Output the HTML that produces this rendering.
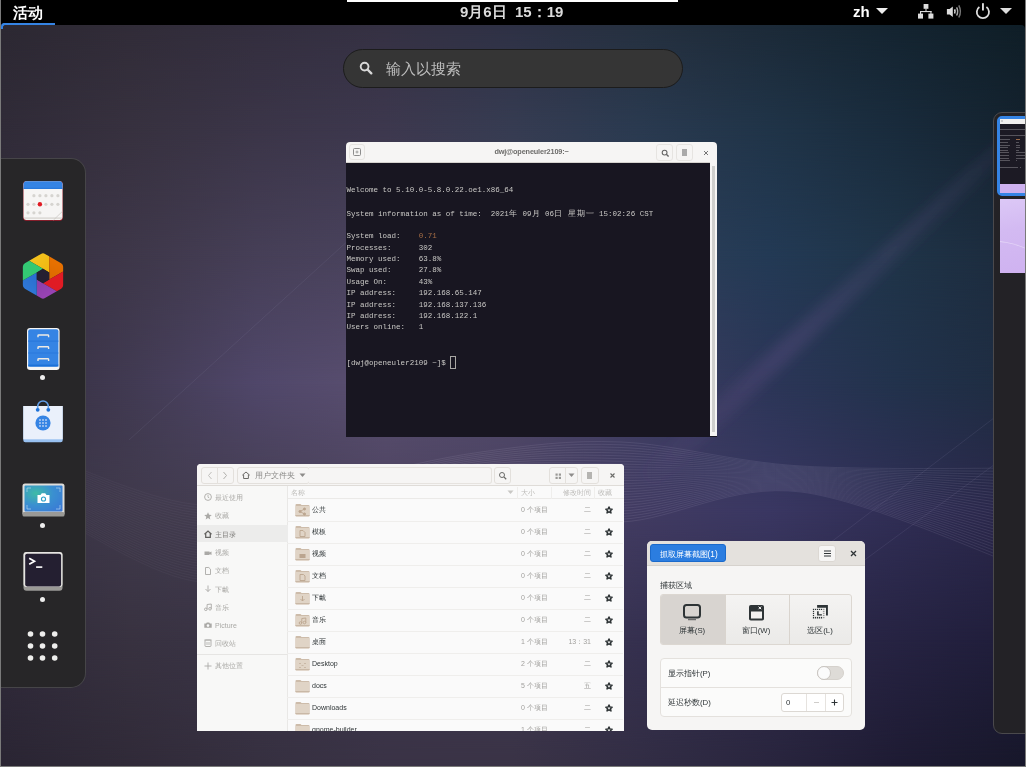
<!DOCTYPE html>
<html><head><meta charset="utf-8">
<style>
*{margin:0;padding:0;box-sizing:border-box}
html,body{width:1026px;height:767px;overflow:hidden;background:#7a7a7a}
body{font-family:"Liberation Sans",sans-serif;position:relative}
.a{position:absolute}
#screen{position:absolute;left:1px;top:0;width:1024px;height:766px;overflow:hidden;background:#2c2836;will-change:transform}
#bg{position:absolute;left:0;top:0;width:1024px;height:766px;overflow:hidden}
#panel{position:absolute;left:0;top:0;width:1024px;height:25px;overflow:visible;will-change:transform;background:#000;color:#fff}
#search{position:absolute;left:342px;top:49px;width:340px;height:39px;border-radius:20px;background:#353535;border:1px solid #1c1c1c}
#dock{position:absolute;left:-1px;top:158px;width:86px;height:530px;background:#272628;border:1px solid #464548;border-left:none;border-radius:0 15px 15px 0}
.win{position:absolute;overflow:hidden}
.fmt{font-size:7px;line-height:12px;white-space:nowrap}
.btn{border:1px solid #e3e0dc;border-radius:3px;background:#f6f5f4}
.ssl{font-size:7.8px;line-height:12px;color:#2e3436;text-align:center;white-space:nowrap}
.ssr{font-size:7.8px;line-height:12px;color:#2e3436;white-space:nowrap}
.cj{display:inline-block;width:9.02px;text-align:center;font-size:8px}
#term{left:345px;top:142px;width:371px;height:295px;background:#181621;border-radius:4px 4px 0 0}
#term .hb{position:absolute;left:0;top:0;width:100%;height:21px;background:#f6f5f4;border-bottom:1px solid #d6d3cf}
#fm{left:196px;top:464px;width:427px;height:267px;background:#fafafa;border-radius:4px 4px 0 0}
#ss{left:646px;top:541px;width:218px;height:189px;background:#f6f5f4;border-radius:5px}
#ws{position:absolute;left:992px;top:112px;width:40px;height:622px;background:#232226;border:1px solid #4a494c;border-radius:9px 0 0 9px;overflow:hidden}
</style></head><body>
<div id="screen">
<div id="bg"><div class="a" style="left:0;top:0;width:1024px;height:24px;background:linear-gradient(90deg,#2c2832 0.00%,#312c38 12.50%,#332e3e 25.00%,#353143 37.50%,#2e3145 50.00%,#25303f 62.50%,#1c2a38 75.00%,#142430 87.50%,#0f1e27 100.00%)"></div><div class="a" style="left:0;top:24px;width:1024px;height:104px;background:linear-gradient(90deg,#2c2832 0.00%,#312c38 12.50%,#332e3e 25.00%,#353143 37.50%,#2e3145 50.00%,#25303f 62.50%,#1c2a38 75.00%,#142430 87.50%,#0f1e27 100.00%)"></div><div class="a" style="left:0;top:24px;width:1024px;height:104px;background:linear-gradient(90deg,#302b38 0.00%,#37313f 12.50%,#3b3548 25.00%,#3d384e 37.50%,#363c52 50.00%,#2a3a50 62.50%,#203448 75.00%,#192b3c 87.50%,#14222e 100.00%);-webkit-mask-image:linear-gradient(180deg,transparent,#000);mask-image:linear-gradient(180deg,transparent,#000)"></div><div class="a" style="left:0;top:128px;width:1024px;height:128px;background:linear-gradient(90deg,#302b38 0.00%,#37313f 12.50%,#3b3548 25.00%,#3d384e 37.50%,#363c52 50.00%,#2a3a50 62.50%,#203448 75.00%,#192b3c 87.50%,#14222e 100.00%)"></div><div class="a" style="left:0;top:128px;width:1024px;height:128px;background:linear-gradient(90deg,#36303e 0.00%,#3e3749 12.50%,#463f57 25.00%,#4a435e 37.50%,#3f3f5a 50.00%,#2e3f58 62.50%,#233a55 75.00%,#1f3448 87.50%,#1c2a3c 100.00%);-webkit-mask-image:linear-gradient(180deg,transparent,#000);mask-image:linear-gradient(180deg,transparent,#000)"></div><div class="a" style="left:0;top:256px;width:1024px;height:128px;background:linear-gradient(90deg,#36303e 0.00%,#3e3749 12.50%,#463f57 25.00%,#4a435e 37.50%,#3f3f5a 50.00%,#2e3f58 62.50%,#233a55 75.00%,#1f3448 87.50%,#1c2a3c 100.00%)"></div><div class="a" style="left:0;top:256px;width:1024px;height:128px;background:linear-gradient(90deg,#342e3e 0.00%,#413a52 12.50%,#50476a 25.00%,#5a4f70 37.50%,#504868 50.00%,#3e3e62 62.50%,#2c3658 75.00%,#22324c 87.50%,#1e2c40 100.00%);-webkit-mask-image:linear-gradient(180deg,transparent,#000);mask-image:linear-gradient(180deg,transparent,#000)"></div><div class="a" style="left:0;top:384px;width:1024px;height:128px;background:linear-gradient(90deg,#342e3e 0.00%,#413a52 12.50%,#50476a 25.00%,#5a4f70 37.50%,#504868 50.00%,#3e3e62 62.50%,#2c3658 75.00%,#22324c 87.50%,#1e2c40 100.00%)"></div><div class="a" style="left:0;top:384px;width:1024px;height:128px;background:linear-gradient(90deg,#383244 0.00%,#403a4c 12.50%,#453e52 25.00%,#4c435f 37.50%,#4a4262 50.00%,#413b62 62.50%,#3a3762 75.00%,#302e55 87.50%,#292648 100.00%);-webkit-mask-image:linear-gradient(180deg,transparent,#000);mask-image:linear-gradient(180deg,transparent,#000)"></div><div class="a" style="left:0;top:512px;width:1024px;height:128px;background:linear-gradient(90deg,#383244 0.00%,#403a4c 12.50%,#453e52 25.00%,#4c435f 37.50%,#4a4262 50.00%,#413b62 62.50%,#3a3762 75.00%,#302e55 87.50%,#292648 100.00%)"></div><div class="a" style="left:0;top:512px;width:1024px;height:128px;background:linear-gradient(90deg,#302a3a 0.00%,#383240 12.50%,#3a3447 25.00%,#3c354a 37.50%,#3e3850 50.00%,#35304f 62.50%,#2e2a48 75.00%,#262342 87.50%,#1f1d3a 100.00%);-webkit-mask-image:linear-gradient(180deg,transparent,#000);mask-image:linear-gradient(180deg,transparent,#000)"></div><div class="a" style="left:0;top:640px;width:1024px;height:126px;background:linear-gradient(90deg,#302a3a 0.00%,#383240 12.50%,#3a3447 25.00%,#3c354a 37.50%,#3e3850 50.00%,#35304f 62.50%,#2e2a48 75.00%,#262342 87.50%,#1f1d3a 100.00%)"></div><div class="a" style="left:0;top:640px;width:1024px;height:126px;background:linear-gradient(90deg,#2a2533 0.00%,#302a38 12.50%,#363040 25.00%,#3a3346 37.50%,#3a3346 50.00%,#322d44 62.50%,#29253e 75.00%,#1e1b33 87.50%,#17172a 100.00%);-webkit-mask-image:linear-gradient(180deg,transparent,#000);mask-image:linear-gradient(180deg,transparent,#000)"></div></div>
<svg id="bgfx" class="a" style="left:0;top:0" width="1024" height="766"><defs><linearGradient id="stg" x1="0" y1="1" x2="1" y2="0"><stop offset="0" stop-color="#7a5a9a" stop-opacity="0"/><stop offset="0.35" stop-color="#7a5a9a" stop-opacity="0.25"/><stop offset="1" stop-color="#7a5a9a" stop-opacity="0"/></linearGradient>
<filter id="blr" x="-20%" y="-20%" width="140%" height="140%"><feGaussianBlur stdDeviation="6"/></filter></defs>
<path d="M640 470 L1040 100 L1040 125 L650 490Z" fill="url(#stg)" filter="url(#blr)"/><path d="M880 258 L1000 146" stroke="#8a6aa0" stroke-width="2" opacity="0.25" filter="url(#blr)"/>
<g stroke="#b8b0d8" stroke-width="0.8" fill="none" opacity="0.12"><path d="M800 565 L1010 405"/><path d="M850 570 L1020 445"/><path d="M128 440 L350 238"/></g><defs><linearGradient id="wg" gradientUnits="userSpaceOnUse" x1="0" y1="0" x2="1024" y2="0"><stop offset="0" stop-color="#d8d0e8" stop-opacity="0.35"/><stop offset="0.2" stop-color="#d8d0e8" stop-opacity="0.45"/><stop offset="0.45" stop-color="#d8d0e8" stop-opacity="1"/><stop offset="1" stop-color="#d8d0e8" stop-opacity="1"/></linearGradient></defs><g fill="none" stroke="url(#wg)" stroke-width="0.6" opacity="0.17"><path d="M60.0 462.0 C83.3 469.2 153.3 502.0 200.0 505.0 C246.7 508.0 293.3 488.8 340.0 480.0 C386.7 471.2 433.3 458.3 480.0 452.0 C526.7 445.7 566.7 439.7 620.0 442.0 C673.3 444.3 730.0 461.7 800.0 466.0 C870.0 470.3 1000.0 467.7 1040.0 468.0"/><path d="M60.0 464.0 C83.3 471.3 153.3 504.6 200.0 507.7 C246.7 510.7 293.3 491.2 340.0 482.2 C386.7 473.3 433.3 460.1 480.0 453.8 C526.7 447.6 566.7 442.6 620.0 444.8 C673.3 446.9 730.0 462.4 800.0 466.9 C870.0 471.4 1000.0 470.9 1040.0 471.7"/><path d="M60.0 466.0 C83.3 473.4 153.3 507.2 200.0 510.3 C246.7 513.4 293.3 493.6 340.0 484.5 C386.7 475.4 433.3 461.8 480.0 455.7 C526.7 449.5 566.7 445.5 620.0 447.5 C673.3 449.5 730.0 463.1 800.0 467.8 C870.0 472.4 1000.0 474.1 1040.0 475.4"/><path d="M60.0 468.0 C83.3 475.5 153.3 509.8 200.0 513.0 C246.7 516.1 293.3 496.0 340.0 486.7 C386.7 477.5 433.3 463.6 480.0 457.5 C526.7 451.4 566.7 448.4 620.0 450.3 C673.3 452.1 730.0 463.9 800.0 468.7 C870.0 473.5 1000.0 477.3 1040.0 479.1"/><path d="M60.0 470.0 C83.3 477.6 153.3 512.5 200.0 515.6 C246.7 518.8 293.3 498.4 340.0 489.0 C386.7 479.6 433.3 465.3 480.0 459.3 C526.7 453.3 566.7 451.3 620.0 453.0 C673.3 454.7 730.0 464.6 800.0 469.6 C870.0 474.5 1000.0 480.6 1040.0 482.8"/><path d="M60.0 472.0 C83.3 479.7 153.3 515.1 200.0 518.3 C246.7 521.5 293.3 500.7 340.0 491.2 C386.7 481.7 433.3 467.0 480.0 461.1 C526.7 455.2 566.7 454.2 620.0 455.8 C673.3 457.4 730.0 465.4 800.0 470.5 C870.0 475.6 1000.0 483.8 1040.0 486.4"/><path d="M60.0 474.0 C83.3 481.8 153.3 517.7 200.0 520.9 C246.7 524.2 293.3 503.1 340.0 493.4 C386.7 483.8 433.3 468.8 480.0 463.0 C526.7 457.1 566.7 457.1 620.0 458.6 C673.3 460.0 730.0 466.1 800.0 471.4 C870.0 476.6 1000.0 487.0 1040.0 490.1"/><path d="M60.0 476.0 C83.3 483.9 153.3 520.3 200.0 523.6 C246.7 526.9 293.3 505.5 340.0 495.7 C386.7 485.9 433.3 470.5 480.0 464.8 C526.7 459.1 566.7 460.1 620.0 461.3 C673.3 462.6 730.0 466.9 800.0 472.3 C870.0 477.7 1000.0 490.2 1040.0 493.8"/><path d="M60.0 478.0 C83.3 486.0 153.3 522.9 200.0 526.2 C246.7 529.6 293.3 507.9 340.0 497.9 C386.7 488.0 433.3 472.3 480.0 466.6 C526.7 461.0 566.7 463.0 620.0 464.1 C673.3 465.2 730.0 467.6 800.0 473.2 C870.0 478.7 1000.0 493.5 1040.0 497.5"/><path d="M60.0 480.0 C83.3 488.1 153.3 525.5 200.0 528.9 C246.7 532.3 293.3 510.2 340.0 500.2 C386.7 490.1 433.3 474.0 480.0 468.4 C526.7 462.9 566.7 465.9 620.0 466.8 C673.3 467.8 730.0 468.3 800.0 474.1 C870.0 479.8 1000.0 496.7 1040.0 501.2"/><path d="M60.0 482.0 C83.3 490.3 153.3 528.1 200.0 531.6 C246.7 535.0 293.3 512.6 340.0 502.4 C386.7 492.2 433.3 475.7 480.0 470.3 C526.7 464.8 566.7 468.8 620.0 469.6 C673.3 470.4 730.0 469.1 800.0 475.0 C870.0 480.9 1000.0 499.9 1040.0 504.9"/><path d="M60.0 484.0 C83.3 492.4 153.3 530.8 200.0 534.2 C246.7 537.6 293.3 515.0 340.0 504.7 C386.7 494.3 433.3 477.5 480.0 472.1 C526.7 466.7 566.7 471.7 620.0 472.3 C673.3 473.0 730.0 469.8 800.0 475.9 C870.0 481.9 1000.0 503.1 1040.0 508.6"/><path d="M60.0 486.0 C83.3 494.5 153.3 533.4 200.0 536.9 C246.7 540.3 293.3 517.4 340.0 506.9 C386.7 496.4 433.3 479.2 480.0 473.9 C526.7 468.6 566.7 474.6 620.0 475.1 C673.3 475.6 730.0 470.6 800.0 476.8 C870.0 483.0 1000.0 506.4 1040.0 512.3"/><path d="M60.0 488.0 C83.3 496.6 153.3 536.0 200.0 539.5 C246.7 543.0 293.3 519.8 340.0 509.1 C386.7 498.5 433.3 481.0 480.0 475.8 C526.7 470.5 566.7 477.5 620.0 477.9 C673.3 478.2 730.0 471.3 800.0 477.7 C870.0 484.0 1000.0 509.6 1040.0 516.0"/><path d="M60.0 490.0 C83.3 498.7 153.3 538.6 200.0 542.2 C246.7 545.7 293.3 522.1 340.0 511.4 C386.7 500.6 433.3 482.7 480.0 477.6 C526.7 472.5 566.7 480.5 620.0 480.6 C673.3 480.8 730.0 472.0 800.0 478.6 C870.0 485.1 1000.0 512.8 1040.0 519.7"/><path d="M60.0 492.0 C83.3 500.8 153.3 541.2 200.0 544.8 C246.7 548.4 293.3 524.5 340.0 513.6 C386.7 502.7 433.3 484.5 480.0 479.4 C526.7 474.4 566.7 483.4 620.0 483.4 C673.3 483.4 730.0 472.8 800.0 479.4 C870.0 486.1 1000.0 516.0 1040.0 523.3"/><path d="M60.0 494.0 C83.3 502.9 153.3 543.8 200.0 547.5 C246.7 551.1 293.3 526.9 340.0 515.9 C386.7 504.8 433.3 486.2 480.0 481.2 C526.7 476.3 566.7 486.3 620.0 486.1 C673.3 486.0 730.0 473.5 800.0 480.3 C870.0 487.2 1000.0 519.3 1040.0 527.0"/><path d="M60.0 496.0 C83.3 505.0 153.3 546.5 200.0 550.1 C246.7 553.8 293.3 529.3 340.0 518.1 C386.7 506.9 433.3 487.9 480.0 483.1 C526.7 478.2 566.7 489.2 620.0 488.9 C673.3 488.6 730.0 474.3 800.0 481.2 C870.0 488.2 1000.0 522.5 1040.0 530.7"/><path d="M60.0 498.0 C83.3 507.1 153.3 549.1 200.0 552.8 C246.7 556.5 293.3 531.7 340.0 520.3 C386.7 509.0 433.3 489.7 480.0 484.9 C526.7 480.1 566.7 492.1 620.0 491.7 C673.3 491.2 730.0 475.0 800.0 482.1 C870.0 489.3 1000.0 525.7 1040.0 534.4"/><path d="M60.0 500.0 C83.3 509.2 153.3 551.7 200.0 555.4 C246.7 559.2 293.3 534.0 340.0 522.6 C386.7 511.1 433.3 491.4 480.0 486.7 C526.7 482.0 566.7 495.0 620.0 494.4 C673.3 493.8 730.0 475.8 800.0 483.0 C870.0 490.3 1000.0 528.9 1040.0 538.1"/><path d="M60.0 502.0 C83.3 511.4 153.3 554.3 200.0 558.1 C246.7 561.9 293.3 536.4 340.0 524.8 C386.7 513.2 433.3 493.2 480.0 488.6 C526.7 483.9 566.7 497.9 620.0 497.2 C673.3 496.4 730.0 476.5 800.0 483.9 C870.0 491.4 1000.0 532.1 1040.0 541.8"/><path d="M60.0 504.0 C83.3 513.5 153.3 556.9 200.0 560.8 C246.7 564.6 293.3 538.8 340.0 527.1 C386.7 515.3 433.3 494.9 480.0 490.4 C526.7 485.9 566.7 500.9 620.0 499.9 C673.3 499.0 730.0 477.2 800.0 484.8 C870.0 492.4 1000.0 535.4 1040.0 545.5"/><path d="M60.0 506.0 C83.3 515.6 153.3 559.5 200.0 563.4 C246.7 567.3 293.3 541.2 340.0 529.3 C386.7 517.4 433.3 496.6 480.0 492.2 C526.7 487.8 566.7 503.8 620.0 502.7 C673.3 501.6 730.0 478.0 800.0 485.7 C870.0 493.5 1000.0 538.6 1040.0 549.2"/><path d="M60.0 508.0 C83.3 517.7 153.3 562.1 200.0 566.1 C246.7 570.0 293.3 543.6 340.0 531.6 C386.7 519.5 433.3 498.4 480.0 494.0 C526.7 489.7 566.7 506.7 620.0 505.4 C673.3 504.2 730.0 478.7 800.0 486.6 C870.0 494.5 1000.0 541.8 1040.0 552.9"/><path d="M60.0 510.0 C83.3 519.8 153.3 564.8 200.0 568.7 C246.7 572.7 293.3 545.9 340.0 533.8 C386.7 521.6 433.3 500.1 480.0 495.9 C526.7 491.6 566.7 509.6 620.0 508.2 C673.3 506.8 730.0 479.5 800.0 487.5 C870.0 495.6 1000.0 545.0 1040.0 556.6"/><path d="M60.0 512.0 C83.3 521.9 153.3 567.4 200.0 571.4 C246.7 575.4 293.3 548.3 340.0 536.0 C386.7 523.8 433.3 501.9 480.0 497.7 C526.7 493.5 566.7 512.5 620.0 511.0 C673.3 509.4 730.0 480.2 800.0 488.4 C870.0 496.6 1000.0 548.3 1040.0 560.2"/><path d="M60.0 514.0 C83.3 524.0 153.3 570.0 200.0 574.0 C246.7 578.1 293.3 550.7 340.0 538.3 C386.7 525.9 433.3 503.6 480.0 499.5 C526.7 495.4 566.7 515.4 620.0 513.7 C673.3 512.0 730.0 480.9 800.0 489.3 C870.0 497.7 1000.0 551.5 1040.0 563.9"/><path d="M60.0 516.0 C83.3 526.1 153.3 572.6 200.0 576.7 C246.7 580.8 293.3 553.1 340.0 540.5 C386.7 528.0 433.3 505.4 480.0 501.3 C526.7 497.3 566.7 518.3 620.0 516.5 C673.3 514.6 730.0 481.7 800.0 490.2 C870.0 498.7 1000.0 554.7 1040.0 567.6"/><path d="M60.0 518.0 C83.3 528.2 153.3 575.2 200.0 579.3 C246.7 583.5 293.3 555.5 340.0 542.8 C386.7 530.1 433.3 507.1 480.0 503.2 C526.7 499.3 566.7 521.3 620.0 519.2 C673.3 517.2 730.0 482.4 800.0 491.1 C870.0 499.8 1000.0 557.9 1040.0 571.3"/><path d="M60.0 520.0 C83.3 530.3 153.3 577.8 200.0 582.0 C246.7 586.2 293.3 557.8 340.0 545.0 C386.7 532.2 433.3 508.8 480.0 505.0 C526.7 501.2 566.7 524.2 620.0 522.0 C673.3 519.8 730.0 483.2 800.0 492.0 C870.0 500.8 1000.0 561.2 1040.0 575.0"/></g></svg>
<div id="panel">
 <div class="a" style="left:0;top:23px;width:54px;height:2px;background:#3584e4"></div>
 <div class="a" style="left:0;top:23px;width:10px;height:6px;overflow:hidden"><div class="a" style="left:0;top:0;width:30px;height:30px;border-radius:4px;border-top:2px solid #3584e4;border-left:2px solid #3584e4;box-shadow:0 0 0 6px #000"></div></div>
 <div class="a" style="left:1014px;top:25px;width:10px;height:10px;overflow:hidden"><div class="a" style="left:-20px;top:0;width:30px;height:30px;border-radius:4px;box-shadow:0 0 0 6px #000"></div></div>
 <div class="a" style="left:12px;top:3.5px;font-size:14.5px;font-weight:bold;color:#fff;line-height:18px">活动</div>
 <div class="a" style="left:346px;top:0;width:331px;height:2px;background:#fff"></div>
 <div class="a" style="left:459px;top:3px;font-size:15px;font-weight:bold;color:#dcdcdc;line-height:18px;white-space:pre">9月6日  15：19</div>
 <div class="a" style="left:852px;top:3px;font-size:15px;font-weight:bold;color:#fff;line-height:18px">zh</div>
 <svg class="a" style="left:874px;top:7px" width="14" height="8"><path d="M1 1H13L7 7Z" fill="#eee"/></svg>
 <svg class="a" style="left:916px;top:3px" width="17" height="17" viewBox="0 0 17 17"><g fill="#ddd"><rect x="6.6" y="1" width="4.8" height="4.8"/><rect x="1" y="10.6" width="5" height="5"/><rect x="11.4" y="10.6" width="5" height="5"/><rect x="8.5" y="5.5" width="1" height="3"/><rect x="3" y="8" width="11.5" height="1.1"/><rect x="3" y="8" width="1.1" height="3"/><rect x="13.4" y="8" width="1.1" height="3"/></g></svg>
 <svg class="a" style="left:944px;top:3px" width="18" height="16" viewBox="0 0 18 16"><path d="M1.9 6.1H4.6L7.8 3.6V14.1L4.6 11.5H1.9Z" fill="#ddd"/><path d="M9.6 6.3Q10.6 8.4 9.6 10.5" stroke="#ddd" stroke-width="1.6" fill="none"/><path d="M11.6 4.3Q13.8 8.4 11.6 12.5" stroke="#aaa" stroke-width="1.5" fill="none"/><path d="M13.8 2.3Q17 8.4 13.8 14.5" stroke="#777" stroke-width="1.5" fill="none"/></svg>
 <svg class="a" style="left:973.5px;top:3px" width="16" height="16" viewBox="0 0 16 16"><path d="M4.4 4A6.1 6.1 0 1 0 11.4 4" stroke="#ddd" stroke-width="1.8" fill="none"/><rect x="7" y="0.2" width="1.9" height="7.3" fill="#ddd"/></svg>
 <svg class="a" style="left:997.5px;top:7px" width="14" height="8"><path d="M1 1H13L7 7Z" fill="#ddd"/></svg>
</div>
<div id="search">
 <svg class="a" style="left:15px;top:11px" width="15" height="15" viewBox="0 0 15 15"><circle cx="5.6" cy="5.6" r="3.9" stroke="#d8d8d8" stroke-width="1.9" fill="none"/><path d="M8.5 8.5L12.3 12.3" stroke="#d8d8d8" stroke-width="2.4" stroke-linecap="round"/></svg>
 <div class="a" style="left:42px;top:10px;font-size:15px;color:#bdbdbd;line-height:18px">输入以搜索</div>
</div>
<div id="dock">
 <!-- calendar -->
 <svg class="a" style="left:23px;top:22px" width="40" height="40" viewBox="0 0 40 40">
  <rect x="0.2" y="0.3" width="39.6" height="39.4" rx="3" fill="#a51d2d"/>
  <rect x="0.5" y="0.3" width="39" height="38.6" rx="3" fill="#f6f5f4"/>
  <rect x="1" y="36.4" width="38" height="1.4" fill="#d8d6d2"/>
  <path d="M0.5 3.3A3 3 0 0 1 3.5 0.3H36.5A3 3 0 0 1 39.5 3.3V7.8H0.5Z" fill="#3584e4"/>
  <rect x="0.5" y="6.9" width="39" height="0.9" fill="#1c71d8"/>
  <g fill="#d6d4d0"><circle cx="10.9" cy="14.7" r="1.6"/><circle cx="16.9" cy="14.7" r="1.6"/><circle cx="22.9" cy="14.7" r="1.6"/><circle cx="28.9" cy="14.7" r="1.6"/><circle cx="34.9" cy="14.7" r="1.6"/><circle cx="5" cy="23.3" r="1.6"/><circle cx="10.9" cy="23.3" r="1.6"/><circle cx="22.9" cy="23.3" r="1.6"/><circle cx="28.9" cy="23.3" r="1.6"/><circle cx="34.9" cy="23.3" r="1.6"/><circle cx="5" cy="31.8" r="1.6"/><circle cx="10.9" cy="31.8" r="1.6"/><circle cx="16.9" cy="31.8" r="1.6"/></g>
  <circle cx="16.9" cy="23.3" r="2.2" fill="#e01b24"/>
  <path d="M39.3 30.5L30.5 39" stroke="#c8c6c2" stroke-width="0.7"/>
 </svg>
 <!-- hexagon -->
 <svg class="a" style="left:21px;top:94px" width="44" height="46" viewBox="0 0 44 46">
  <defs>
   <mask id="hm"><path d="M22.00 4.35 L38.15 13.68 L38.15 32.32 L22.00 41.65 L5.85 32.32 L5.85 13.67Z" fill="#fff" stroke="#fff" stroke-width="8" stroke-linejoin="round"/></mask>
   <linearGradient id="hy" x1="0" y1="0" x2="1" y2="1"><stop offset="0" stop-color="#f8d43a"/><stop offset="1" stop-color="#f0b810"/></linearGradient>
   <linearGradient id="ho" x1="0.5" y1="0" x2="0.2" y2="1"><stop offset="0" stop-color="#ff8000"/><stop offset="1" stop-color="#dd6a00"/></linearGradient>
   <linearGradient id="hp" x1="0" y1="0" x2="0.6" y2="1"><stop offset="0" stop-color="#8a3ea8"/><stop offset="1" stop-color="#b04cc8"/></linearGradient>
   <linearGradient id="hb" x1="0.8" y1="0" x2="0.3" y2="1"><stop offset="0" stop-color="#2a6fd0"/><stop offset="1" stop-color="#3a8ee8"/></linearGradient>
  </defs>
  <g mask="url(#hm)"><path d="M22.00 15.80 L28.24 19.40 L28.24 -25.60 L-16.97 -6.70Z" fill="url(#hy)"/><path d="M28.24 19.40 L28.24 26.60 L67.21 4.10 L28.24 -25.60Z" fill="url(#ho)"/><path d="M28.24 26.60 L22.00 30.20 L60.97 52.70 L67.21 4.10Z" fill="#e01b24"/><path d="M22.00 30.20 L15.76 26.60 L15.76 71.60 L60.97 52.70Z" fill="url(#hp)"/><path d="M15.76 26.60 L15.76 19.40 L-23.21 41.90 L15.76 71.60Z" fill="url(#hb)"/><path d="M15.76 19.40 L22.00 15.80 L-16.97 -6.70 L-23.21 41.90Z" fill="#33c873"/></g>
  <path d="M22.00 15.80 L28.24 19.40 L28.24 26.60 L22.00 30.20 L15.76 26.60 L15.76 19.40Z" fill="#241f31"/>
 </svg>
 <!-- files -->
 <svg class="a" style="left:27px;top:169px" width="33" height="42" viewBox="0 0 33 42">
  <rect x="0" y="0" width="32.6" height="42" rx="3.2" fill="#f6f5f4"/>
  <rect x="1.2" y="1.3" width="30.2" height="37.3" rx="2" fill="#3584e4"/>
  <path d="M1.2 13.2H31.4M1.2 25H31.4" stroke="#2a78dc" stroke-width="1.2"/>
  <rect x="1.2" y="36.6" width="30.2" height="2" fill="#1c71d8"/>
  <path d="M11 9.2V7.6Q11 7.0 11.8 7.0H20.8Q21.6 7.0 21.6 7.6V9.2" fill="none" stroke="#eeeae4" stroke-width="1.4"/><path d="M11 21.0V19.4Q11 18.8 11.8 18.8H20.8Q21.6 18.8 21.6 19.4V21.0" fill="none" stroke="#eeeae4" stroke-width="1.4"/><path d="M11 32.9V31.3Q11 30.7 11.8 30.7H20.8Q21.6 30.7 21.6 31.3V32.9" fill="none" stroke="#eeeae4" stroke-width="1.4"/>
 </svg>
 <div class="a" style="left:40px;top:216px;width:5px;height:5px;border-radius:50%;background:#eee"></div>
 <!-- store -->
 <svg class="a" style="left:23px;top:241px" width="40" height="43" viewBox="0 0 40 43">
  <path d="M0.3 6H39.7V40.3A2 2 0 0 1 37.7 42.3H2.3A2 2 0 0 1 0.3 40.3Z" fill="#99c1f1"/>
  <rect x="0.3" y="6" width="39.4" height="33.3" fill="#eaf0fb"/>
  <path d="M14.7 9.8V6.3A5.3 5.3 0 0 1 25.3 6.3V9.8" stroke="#62a0ea" stroke-width="1.6" fill="none"/>
  <circle cx="14.7" cy="9.8" r="1.9" fill="#1c71d8"/><circle cx="25.3" cy="9.8" r="1.9" fill="#1c71d8"/>
  <circle cx="20" cy="23" r="7.6" fill="#3584e4"/>
  <g fill="#a8c8f0"><rect x="16.1" y="19.1" width="1.8" height="1.8"/><rect x="19.1" y="19.1" width="1.8" height="1.8"/><rect x="22.1" y="19.1" width="1.8" height="1.8"/><rect x="16.1" y="22.1" width="1.8" height="1.8"/><rect x="19.1" y="22.1" width="1.8" height="1.8"/><rect x="22.1" y="22.1" width="1.8" height="1.8"/><rect x="16.1" y="25.1" width="1.8" height="1.8"/><rect x="19.1" y="25.1" width="1.8" height="1.8"/><rect x="22.1" y="25.1" width="1.8" height="1.8"/></g>
 </svg>
 <!-- screenshot -->
 <svg class="a" style="left:21.5px;top:324px" width="43" height="34" viewBox="0 0 43 34">
  <rect x="0.5" y="0.5" width="42" height="32" rx="2.5" fill="#deddda"/>
  <rect x="0.5" y="29" width="42" height="4.5" rx="1.5" fill="#9a9996"/>
  <defs><radialGradient id="sg" cx="0.3" cy="0.3" r="0.9"><stop offset="0" stop-color="#3fbba6"/><stop offset="0.5" stop-color="#3a90d0"/><stop offset="1" stop-color="#3a78d6"/></radialGradient></defs>
  <rect x="2.5" y="2.5" width="38" height="26" rx="1" fill="url(#sg)"/>
  <path d="M5 9V5H9M34 5H38V9M38 22V26H34M9 26H5V22" stroke="#cfe8f5" stroke-width="0.8" fill="none" opacity="0.7"/>
  <path d="M15.5 12H18.5L19.8 10.3H23.2L24.5 12H27.5V20H15.5Z" fill="#fff"/>
  <circle cx="21.5" cy="16" r="2.6" fill="#2a9fc8"/><circle cx="21.5" cy="16" r="1.5" fill="#fff"/>
 </svg>
 <div class="a" style="left:40px;top:364px;width:5px;height:5px;border-radius:50%;background:#eee"></div>
 <!-- terminal -->
 <svg class="a" style="left:23px;top:392.6px" width="40" height="40" viewBox="0 0 40 40">
  <rect x="0.5" y="0" width="39" height="38.7" rx="3" fill="#9a9996"/>
  <rect x="0.5" y="0" width="39" height="35" rx="3" fill="#e6e5e2"/>
  <rect x="2.2" y="1.7" width="35.9" height="32.7" rx="1.8" fill="#241f31"/>
  <path d="M6.2 6.3L11.5 9.3L6.2 12.3" stroke="#fff" stroke-width="1.7" fill="none"/>
  <rect x="13.1" y="14.3" width="6.2" height="1.6" fill="#fff"/>
 </svg>
 <div class="a" style="left:40px;top:438px;width:5px;height:5px;border-radius:50%;background:#eee"></div>
 <!-- grid -->
 <svg class="a" style="left:26px;top:470px" width="34" height="34" viewBox="0 0 34 34">
  <g fill="#eeeeec"><circle cx="4.5" cy="5" r="2.8"/><circle cx="16.5" cy="5" r="2.8"/><circle cx="28.7" cy="5" r="2.8"/>
  <circle cx="4.5" cy="17" r="2.8"/><circle cx="16.5" cy="17" r="2.8"/><circle cx="28.7" cy="17" r="2.8"/>
  <circle cx="4.5" cy="29" r="2.8"/><circle cx="16.5" cy="29" r="2.8"/><circle cx="28.7" cy="29" r="2.8"/></g>
 </svg>
</div>
<div class="win" id="term">
 <div class="hb">
  <div class="a" style="left:3px;top:2px;width:16px;height:16px;border:1px solid #e6e4e1;border-radius:3px;background:#f6f5f4"></div>
  <svg class="a" style="left:7px;top:6px" width="8" height="8" viewBox="0 0 8 8"><rect x="0.5" y="0.5" width="7" height="7" rx="1" fill="none" stroke="#8d8d8d" stroke-width="1"/><path d="M2.5 4H5.5M4 2.5V5.5" stroke="#8d8d8d" stroke-width="0.8"/></svg>
  <div class="a" style="left:0;top:5px;width:371px;text-align:center;font-size:7.3px;color:#6d6c6a;line-height:10px;font-weight:bold;letter-spacing:-0.15px">dwj@openeuler2109:~</div>
  <div class="a" style="left:310px;top:2px;width:17px;height:17px;border:1px solid #e6e4e1;border-radius:3px;background:#f6f5f4"></div>
  <svg class="a" style="left:314.5px;top:6.5px" width="9" height="9" viewBox="0 0 9 9"><circle cx="3.6" cy="3.6" r="2.4" stroke="#666" stroke-width="1.1" fill="none"/><path d="M5.3 5.3L7.6 7.6" stroke="#666" stroke-width="1.4"/></svg>
  <div class="a" style="left:330px;top:2px;width:17px;height:17px;border:1px solid #e6e4e1;border-radius:3px;background:#f6f5f4"></div>
  <div class="a" style="left:336px;top:7px;width:5px;height:7px;background:#aaa"></div>
  <svg class="a" style="left:357px;top:7.5px" width="6" height="6" viewBox="0 0 6 6"><path d="M1 1L5 5M5 1L1 5" stroke="#666" stroke-width="0.9"/></svg>
 </div>
 <pre class="a" style="left:0.5px;margin:0;font-family:'Liberation Mono',monospace;font-size:7.52px;line-height:11.37px;color:#c9c8c5;top:20px">


Welcome to 5.10.0-5.8.0.22.oe1.x86_64

System information as of time:  2021<span class="cj">年</span> 09<span class="cj">月</span> 06<span class="cj">日</span> <span class="cj">星</span><span class="cj">期</span><span class="cj">一</span> 15:02:26 CST

System load:    <span style="color:#a86e45">0.71</span>
Processes:      302
Memory used:    63.8%
Swap used:      27.8%
Usage On:       43%
IP address:     192.168.65.147
IP address:     192.168.137.136
IP address:     192.168.122.1
Users online:   1


[dwj@openeuler2109 ~]$ <span style="display:inline-block;width:5.5px;height:12.3px;border:1px solid #a8a7a4;vertical-align:-3.3px"></span></pre>
 <div class="a" style="left:364px;top:20px;width:7px;height:274px;background:#f6f5f4"></div>
 <div class="a" style="left:366px;top:24px;width:3px;height:266px;background:#cfcfcd"></div>
</div>
<div class="win" id="fm">
 <div class="a" style="left:0;top:0;width:427px;height:22px;background:#f6f5f4;border-bottom:1px solid #dfdcd8"></div>
 <div class="a btn" style="left:4px;top:3px;width:33px;height:17px"></div>
 <div class="a" style="left:20px;top:3px;width:1px;height:17px;background:#e4e1dd"></div>
 <svg class="a" style="left:9px;top:7px" width="8" height="9" viewBox="0 0 8 9"><path d="M5.5 1L2.5 4.5L5.5 8" fill="none" stroke="#c0bfbc" stroke-width="1"/></svg>
 <svg class="a" style="left:24px;top:7px" width="8" height="9" viewBox="0 0 8 9"><path d="M2.5 1L5.5 4.5L2.5 8" fill="none" stroke="#b0afac" stroke-width="1"/></svg>
 <div class="a btn" style="left:40px;top:3px;width:73px;height:17px"></div>
 <svg class="a" style="left:44px;top:6px" width="10" height="10" viewBox="0 0 10 10"><path d="M1.3 5.2L5 2L8.7 5.2M2.6 4.5V8.5H7.4V4.5" fill="none" stroke="#6d6c69" stroke-width="1"/></svg>
 <div class="a fmt" style="left:58px;top:5px;color:#8b8a88;font-size:8.3px;line-height:12px">用户文件夹</div>
 <svg class="a" style="left:102px;top:9px" width="7" height="5"><path d="M0.5 0.5H6.5L3.5 4Z" fill="#8d8c8a"/></svg>
 <div class="a" style="left:112px;top:3px;width:183px;height:17px;border:1px solid #e6e3df;border-left:none;border-radius:0 3px 3px 0;background:#f6f5f4"></div>
 <div class="a btn" style="left:297px;top:3px;width:17px;height:17px"></div>
 <svg class="a" style="left:301px;top:7px" width="10" height="10" viewBox="0 0 10 10"><circle cx="4" cy="4" r="2.5" stroke="#6a6a68" stroke-width="1" fill="none"/><path d="M5.9 5.9L8.2 8.2" stroke="#6a6a68" stroke-width="1.3"/></svg>
 <div class="a btn" style="left:352px;top:3px;width:29px;height:17px"></div>
 <div class="a" style="left:368px;top:3px;width:1px;height:17px;background:#e4e1dd"></div>
 <svg class="a" style="left:357.5px;top:8.5px" width="7" height="7"><g fill="#9a9996"><rect x="0.5" y="0.5" width="2.2" height="2.2"/><rect x="3.8" y="0.5" width="2.2" height="2.2"/><rect x="0.5" y="3.8" width="2.2" height="2.2"/><rect x="3.8" y="3.8" width="2.2" height="2.2"/></g></svg>
 <svg class="a" style="left:371px;top:9px" width="7" height="5"><path d="M0.5 0.5H6.5L3.5 4Z" fill="#8d8c8a"/></svg>
 <div class="a btn" style="left:384px;top:3px;width:18px;height:17px"></div>
 <div class="a" style="left:390px;top:8px;width:5px;height:7px;background:#b5b4b1"></div>
 <svg class="a" style="left:413px;top:8.7px" width="5" height="5" viewBox="0 0 5 5"><path d="M0.5 0.5L4.5 4.5M4.5 0.5L0.5 4.5" stroke="#6a6a68" stroke-width="1.1"/></svg>
 <div class="a" style="left:0;top:22px;width:91px;height:245px;background:#f8f8f7;border-right:1px solid #e9e8e6">
  <div class="a" style="left:0;top:39px;width:90.5px;height:17px;background:#ececeb"></div>
 </div>
 <div class="a" style="left:0;top:0;width:90px;height:244px"><svg class="a" style="left:6px;top:28px" width="10" height="10" viewBox="0 0 10 10"><circle cx="5" cy="5" r="3.4" fill="none" stroke="#aaa9a6" stroke-width="0.9"/><path d="M5 3V5.2L6.3 6" fill="none" stroke="#aaa9a6" stroke-width="0.8"/></svg><div class="a fmt" style="left:18px;top:27.5px;color:#aaa9a6">最近使用</div><svg class="a" style="left:6px;top:46.5px" width="10" height="10" viewBox="0 0 10 10"><path d="M5 1.3L6.1 3.8L8.8 4L6.7 5.8L7.3 8.5L5 7.1L2.7 8.5L3.3 5.8L1.2 4L3.9 3.8Z" fill="#aaa9a6"/></svg><div class="a fmt" style="left:18px;top:46.0px;color:#aaa9a6">收藏</div><svg class="a" style="left:6px;top:65px" width="10" height="10" viewBox="0 0 10 10"><path d="M1.5 5.2L5 2L8.5 5.2M2.7 4.5V8.3H7.3V4.5" fill="none" stroke="#62615e" stroke-width="1.25"/></svg><div class="a fmt" style="left:18px;top:64.5px;color:#7f7e7b">主目录</div><svg class="a" style="left:6px;top:83.5px" width="10" height="10" viewBox="0 0 10 10"><path d="M1.5 3.5H6.5V7H1.5ZM6.5 4.5L8.5 3.5V7L6.5 6Z" fill="#aaa9a6"/></svg><div class="a fmt" style="left:18px;top:83.0px;color:#aaa9a6">视频</div><svg class="a" style="left:6px;top:101.5px" width="10" height="10" viewBox="0 0 10 10"><path d="M2.5 1.5H5.8L7.5 3.2V8.5H2.5Z" fill="none" stroke="#aaa9a6" stroke-width="0.9"/></svg><div class="a fmt" style="left:18px;top:101.0px;color:#aaa9a6">文档</div><svg class="a" style="left:6px;top:120px" width="10" height="10" viewBox="0 0 10 10"><path d="M5 1.5V7.5M2.5 5L5 7.5L7.5 5" fill="none" stroke="#aaa9a6" stroke-width="0.9"/></svg><div class="a fmt" style="left:18px;top:119.5px;color:#aaa9a6">下載</div><svg class="a" style="left:6px;top:138px" width="10" height="10" viewBox="0 0 10 10"><g fill="none" stroke="#aaa9a6" stroke-width="0.9"><circle cx="2.8" cy="7.3" r="1.3"/><circle cx="7" cy="6.8" r="1.3"/><path d="M4.1 7.3V2.5L8.3 2V6.8"/></g></svg><div class="a fmt" style="left:18px;top:137.5px;color:#aaa9a6">音乐</div><svg class="a" style="left:6px;top:156px" width="10" height="10" viewBox="0 0 10 10"><path d="M1.3 3.5H3L3.8 2.5H6.2L7 3.5H8.7V7.8H1.3Z" fill="#aaa9a6"/><circle cx="5" cy="5.6" r="1.3" fill="#fafafa"/></svg><div class="a fmt" style="left:18px;top:155.5px;color:#aaa9a6">Picture</div><svg class="a" style="left:6px;top:174.39999999999998px" width="10" height="10" viewBox="0 0 10 10"><rect x="2" y="2" width="6" height="6.5" rx="0.8" fill="none" stroke="#aaa9a6" stroke-width="0.9"/><path d="M1.3 2H8.7M4 4V7M6 4V7" stroke="#aaa9a6" stroke-width="0.8"/></svg><div class="a fmt" style="left:18px;top:173.9px;color:#aaa9a6">回收站</div><div class="a" style="left:0;top:190px;width:90px;height:1px;background:#e6e5e3"></div><svg class="a" style="left:6px;top:196.79999999999995px" width="10" height="10" viewBox="0 0 10 10"><path d="M5 1.5V8.5M1.5 5H8.5" stroke="#aaa9a6" stroke-width="0.9"/></svg><div class="a fmt" style="left:18px;top:196.3px;color:#aaa9a6">其他位置</div></div>
 <div class="a" style="left:91px;top:22px;width:336px;height:13px;border-bottom:1px solid #ebeae8;background:#fafafa"></div>
 <div class="a fmt" style="left:94px;top:23px;color:#bdbcb9">名称</div>
 <svg class="a" style="left:310px;top:26px" width="7" height="5"><path d="M0.5 0.5H6.5L3.5 4Z" fill="#c8c7c4"/></svg>
 <div class="a" style="left:320px;top:23px;width:1px;height:12px;background:#efeeec"></div>
 <div class="a fmt" style="left:324px;top:23px;color:#bdbcb9">大小</div>
 <div class="a" style="left:354px;top:23px;width:1px;height:12px;background:#efeeec"></div>
 <div class="a fmt" style="left:366px;top:23px;color:#bdbcb9">修改时间</div>
 <div class="a" style="left:397px;top:23px;width:1px;height:12px;background:#efeeec"></div>
 <div class="a fmt" style="left:401px;top:23px;color:#bdbcb9">收藏</div>
 <div class="a" style="left:90px;top:46px;width:336px;height:0"><svg class="a" style="left:8px;top:-7px" width="15" height="14" viewBox="0 0 15 14"><path d="M0.5 2A1 1 0 0 1 1.5 1H5.5L6.5 2H13.5A1 1 0 0 1 14.5 3V12.5A1 1 0 0 1 13.5 13.5H1.5A1 1 0 0 1 0.5 12.5Z" fill="#cdbcaa"/><path d="M0.5 4A1 1 0 0 1 1.5 3H13.5A1 1 0 0 1 14.5 4V12.5A1 1 0 0 1 13.5 13.5H1.5A1 1 0 0 1 0.5 12.5Z" fill="#e0d4c6"/><path d="M0.5 12.5H14.5" stroke="#c9b8a6" stroke-width="1"/><g stroke="#bba58f" stroke-width="0.9" fill="#bba58f"><path d="M5 8.5L9.5 6M5 8.5L9.5 11" fill="none"/><circle cx="5" cy="8.5" r="1.1"/><circle cx="9.5" cy="6" r="1.1"/><circle cx="9.5" cy="11" r="1.1"/></g></svg><div class="a fmt" style="left:25px;top:-6px;color:#2e3436">公共</div><div class="a fmt" style="left:234px;top:-6px;color:#a09f9c">0 个项目</div><div class="a fmt" style="left:240px;width:64px;text-align:right;top:-6px;color:#a09f9c">二</div><svg class="a" style="left:318.3px;top:-4.3px" width="8" height="8" viewBox="0 0 9 9"><path d="M4.5 1.1L5.5 3.4L8 3.6L6.1 5.3L6.7 7.8L4.5 6.5L2.3 7.8L2.9 5.3L1 3.6L3.5 3.4Z" fill="none" stroke="#2e3436" stroke-width="1.7" stroke-linejoin="round"/></svg></div><div class="a" style="left:90px;top:57px;width:336px;height:1px;background:#efeeec"></div><div class="a" style="left:90px;top:68px;width:336px;height:0"><svg class="a" style="left:8px;top:-7px" width="15" height="14" viewBox="0 0 15 14"><path d="M0.5 2A1 1 0 0 1 1.5 1H5.5L6.5 2H13.5A1 1 0 0 1 14.5 3V12.5A1 1 0 0 1 13.5 13.5H1.5A1 1 0 0 1 0.5 12.5Z" fill="#cdbcaa"/><path d="M0.5 4A1 1 0 0 1 1.5 3H13.5A1 1 0 0 1 14.5 4V12.5A1 1 0 0 1 13.5 13.5H1.5A1 1 0 0 1 0.5 12.5Z" fill="#e0d4c6"/><path d="M0.5 12.5H14.5" stroke="#c9b8a6" stroke-width="1"/><path d="M5 5.5H8L10 7.5V11.5H5Z" fill="none" stroke="#bba58f" stroke-width="0.9"/></svg><div class="a fmt" style="left:25px;top:-6px;color:#2e3436">模板</div><div class="a fmt" style="left:234px;top:-6px;color:#a09f9c">0 个项目</div><div class="a fmt" style="left:240px;width:64px;text-align:right;top:-6px;color:#a09f9c">二</div><svg class="a" style="left:318.3px;top:-4.3px" width="8" height="8" viewBox="0 0 9 9"><path d="M4.5 1.1L5.5 3.4L8 3.6L6.1 5.3L6.7 7.8L4.5 6.5L2.3 7.8L2.9 5.3L1 3.6L3.5 3.4Z" fill="none" stroke="#2e3436" stroke-width="1.7" stroke-linejoin="round"/></svg></div><div class="a" style="left:90px;top:79px;width:336px;height:1px;background:#efeeec"></div><div class="a" style="left:90px;top:90px;width:336px;height:0"><svg class="a" style="left:8px;top:-7px" width="15" height="14" viewBox="0 0 15 14"><path d="M0.5 2A1 1 0 0 1 1.5 1H5.5L6.5 2H13.5A1 1 0 0 1 14.5 3V12.5A1 1 0 0 1 13.5 13.5H1.5A1 1 0 0 1 0.5 12.5Z" fill="#cdbcaa"/><path d="M0.5 4A1 1 0 0 1 1.5 3H13.5A1 1 0 0 1 14.5 4V12.5A1 1 0 0 1 13.5 13.5H1.5A1 1 0 0 1 0.5 12.5Z" fill="#e0d4c6"/><path d="M0.5 12.5H14.5" stroke="#c9b8a6" stroke-width="1"/><path d="M4.5 7H10.5V11H4.5Z" fill="#bba58f"/></svg><div class="a fmt" style="left:25px;top:-6px;color:#2e3436">视频</div><div class="a fmt" style="left:234px;top:-6px;color:#a09f9c">0 个项目</div><div class="a fmt" style="left:240px;width:64px;text-align:right;top:-6px;color:#a09f9c">二</div><svg class="a" style="left:318.3px;top:-4.3px" width="8" height="8" viewBox="0 0 9 9"><path d="M4.5 1.1L5.5 3.4L8 3.6L6.1 5.3L6.7 7.8L4.5 6.5L2.3 7.8L2.9 5.3L1 3.6L3.5 3.4Z" fill="none" stroke="#2e3436" stroke-width="1.7" stroke-linejoin="round"/></svg></div><div class="a" style="left:90px;top:101px;width:336px;height:1px;background:#efeeec"></div><div class="a" style="left:90px;top:112px;width:336px;height:0"><svg class="a" style="left:8px;top:-7px" width="15" height="14" viewBox="0 0 15 14"><path d="M0.5 2A1 1 0 0 1 1.5 1H5.5L6.5 2H13.5A1 1 0 0 1 14.5 3V12.5A1 1 0 0 1 13.5 13.5H1.5A1 1 0 0 1 0.5 12.5Z" fill="#cdbcaa"/><path d="M0.5 4A1 1 0 0 1 1.5 3H13.5A1 1 0 0 1 14.5 4V12.5A1 1 0 0 1 13.5 13.5H1.5A1 1 0 0 1 0.5 12.5Z" fill="#e0d4c6"/><path d="M0.5 12.5H14.5" stroke="#c9b8a6" stroke-width="1"/><path d="M5 5.5H8.5L10 7V11.5H5Z" fill="none" stroke="#bba58f" stroke-width="0.9"/></svg><div class="a fmt" style="left:25px;top:-6px;color:#2e3436">文档</div><div class="a fmt" style="left:234px;top:-6px;color:#a09f9c">0 个项目</div><div class="a fmt" style="left:240px;width:64px;text-align:right;top:-6px;color:#a09f9c">二</div><svg class="a" style="left:318.3px;top:-4.3px" width="8" height="8" viewBox="0 0 9 9"><path d="M4.5 1.1L5.5 3.4L8 3.6L6.1 5.3L6.7 7.8L4.5 6.5L2.3 7.8L2.9 5.3L1 3.6L3.5 3.4Z" fill="none" stroke="#2e3436" stroke-width="1.7" stroke-linejoin="round"/></svg></div><div class="a" style="left:90px;top:123px;width:336px;height:1px;background:#efeeec"></div><div class="a" style="left:90px;top:134px;width:336px;height:0"><svg class="a" style="left:8px;top:-7px" width="15" height="14" viewBox="0 0 15 14"><path d="M0.5 2A1 1 0 0 1 1.5 1H5.5L6.5 2H13.5A1 1 0 0 1 14.5 3V12.5A1 1 0 0 1 13.5 13.5H1.5A1 1 0 0 1 0.5 12.5Z" fill="#cdbcaa"/><path d="M0.5 4A1 1 0 0 1 1.5 3H13.5A1 1 0 0 1 14.5 4V12.5A1 1 0 0 1 13.5 13.5H1.5A1 1 0 0 1 0.5 12.5Z" fill="#e0d4c6"/><path d="M0.5 12.5H14.5" stroke="#c9b8a6" stroke-width="1"/><path d="M7.5 5V10M5.5 8L7.5 10L9.5 8" fill="none" stroke="#bba58f" stroke-width="0.9"/></svg><div class="a fmt" style="left:25px;top:-6px;color:#2e3436">下載</div><div class="a fmt" style="left:234px;top:-6px;color:#a09f9c">0 个项目</div><div class="a fmt" style="left:240px;width:64px;text-align:right;top:-6px;color:#a09f9c">二</div><svg class="a" style="left:318.3px;top:-4.3px" width="8" height="8" viewBox="0 0 9 9"><path d="M4.5 1.1L5.5 3.4L8 3.6L6.1 5.3L6.7 7.8L4.5 6.5L2.3 7.8L2.9 5.3L1 3.6L3.5 3.4Z" fill="none" stroke="#2e3436" stroke-width="1.7" stroke-linejoin="round"/></svg></div><div class="a" style="left:90px;top:145px;width:336px;height:1px;background:#efeeec"></div><div class="a" style="left:90px;top:156px;width:336px;height:0"><svg class="a" style="left:8px;top:-7px" width="15" height="14" viewBox="0 0 15 14"><path d="M0.5 2A1 1 0 0 1 1.5 1H5.5L6.5 2H13.5A1 1 0 0 1 14.5 3V12.5A1 1 0 0 1 13.5 13.5H1.5A1 1 0 0 1 0.5 12.5Z" fill="#cdbcaa"/><path d="M0.5 4A1 1 0 0 1 1.5 3H13.5A1 1 0 0 1 14.5 4V12.5A1 1 0 0 1 13.5 13.5H1.5A1 1 0 0 1 0.5 12.5Z" fill="#e0d4c6"/><path d="M0.5 12.5H14.5" stroke="#c9b8a6" stroke-width="1"/><g fill="none" stroke="#bba58f" stroke-width="0.9"><circle cx="5.5" cy="10" r="1.3"/><circle cx="9.5" cy="9.5" r="1.3"/><path d="M6.8 10V5.5L10.8 5V9.5"/></g></svg><div class="a fmt" style="left:25px;top:-6px;color:#2e3436">音乐</div><div class="a fmt" style="left:234px;top:-6px;color:#a09f9c">0 个项目</div><div class="a fmt" style="left:240px;width:64px;text-align:right;top:-6px;color:#a09f9c">二</div><svg class="a" style="left:318.3px;top:-4.3px" width="8" height="8" viewBox="0 0 9 9"><path d="M4.5 1.1L5.5 3.4L8 3.6L6.1 5.3L6.7 7.8L4.5 6.5L2.3 7.8L2.9 5.3L1 3.6L3.5 3.4Z" fill="none" stroke="#2e3436" stroke-width="1.7" stroke-linejoin="round"/></svg></div><div class="a" style="left:90px;top:167px;width:336px;height:1px;background:#efeeec"></div><div class="a" style="left:90px;top:178px;width:336px;height:0"><svg class="a" style="left:8px;top:-7px" width="15" height="14" viewBox="0 0 15 14"><path d="M0.5 2A1 1 0 0 1 1.5 1H5.5L6.5 2H13.5A1 1 0 0 1 14.5 3V12.5A1 1 0 0 1 13.5 13.5H1.5A1 1 0 0 1 0.5 12.5Z" fill="#cdbcaa"/><path d="M0.5 4A1 1 0 0 1 1.5 3H13.5A1 1 0 0 1 14.5 4V12.5A1 1 0 0 1 13.5 13.5H1.5A1 1 0 0 1 0.5 12.5Z" fill="#e0d4c6"/><path d="M0.5 12.5H14.5" stroke="#c9b8a6" stroke-width="1"/></svg><div class="a fmt" style="left:25px;top:-6px;color:#2e3436">桌面</div><div class="a fmt" style="left:234px;top:-6px;color:#a09f9c">1 个项目</div><div class="a fmt" style="left:240px;width:64px;text-align:right;top:-6px;color:#a09f9c">13：31</div><svg class="a" style="left:318.3px;top:-4.3px" width="8" height="8" viewBox="0 0 9 9"><path d="M4.5 1.1L5.5 3.4L8 3.6L6.1 5.3L6.7 7.8L4.5 6.5L2.3 7.8L2.9 5.3L1 3.6L3.5 3.4Z" fill="none" stroke="#2e3436" stroke-width="1.7" stroke-linejoin="round"/></svg></div><div class="a" style="left:90px;top:189px;width:336px;height:1px;background:#efeeec"></div><div class="a" style="left:90px;top:200px;width:336px;height:0"><svg class="a" style="left:8px;top:-7px" width="15" height="14" viewBox="0 0 15 14"><path d="M0.5 2A1 1 0 0 1 1.5 1H5.5L6.5 2H13.5A1 1 0 0 1 14.5 3V12.5A1 1 0 0 1 13.5 13.5H1.5A1 1 0 0 1 0.5 12.5Z" fill="#cdbcaa"/><path d="M0.5 4A1 1 0 0 1 1.5 3H13.5A1 1 0 0 1 14.5 4V12.5A1 1 0 0 1 13.5 13.5H1.5A1 1 0 0 1 0.5 12.5Z" fill="#e0d4c6"/><path d="M0.5 12.5H14.5" stroke="#c9b8a6" stroke-width="1"/><g fill="#c9b8a6"><rect x="4" y="6" width="2" height="1"/><rect x="9" y="6" width="2" height="1"/><rect x="4" y="10" width="2" height="1"/><rect x="9" y="10" width="2" height="1"/><rect x="6.5" y="8" width="2" height="1"/></g></svg><div class="a fmt" style="left:25px;top:-6px;color:#2e3436">Desktop</div><div class="a fmt" style="left:234px;top:-6px;color:#a09f9c">2 个项目</div><div class="a fmt" style="left:240px;width:64px;text-align:right;top:-6px;color:#a09f9c">二</div><svg class="a" style="left:318.3px;top:-4.3px" width="8" height="8" viewBox="0 0 9 9"><path d="M4.5 1.1L5.5 3.4L8 3.6L6.1 5.3L6.7 7.8L4.5 6.5L2.3 7.8L2.9 5.3L1 3.6L3.5 3.4Z" fill="none" stroke="#2e3436" stroke-width="1.7" stroke-linejoin="round"/></svg></div><div class="a" style="left:90px;top:211px;width:336px;height:1px;background:#efeeec"></div><div class="a" style="left:90px;top:222px;width:336px;height:0"><svg class="a" style="left:8px;top:-7px" width="15" height="14" viewBox="0 0 15 14"><path d="M0.5 2A1 1 0 0 1 1.5 1H5.5L6.5 2H13.5A1 1 0 0 1 14.5 3V12.5A1 1 0 0 1 13.5 13.5H1.5A1 1 0 0 1 0.5 12.5Z" fill="#cdbcaa"/><path d="M0.5 4A1 1 0 0 1 1.5 3H13.5A1 1 0 0 1 14.5 4V12.5A1 1 0 0 1 13.5 13.5H1.5A1 1 0 0 1 0.5 12.5Z" fill="#e0d4c6"/><path d="M0.5 12.5H14.5" stroke="#c9b8a6" stroke-width="1"/></svg><div class="a fmt" style="left:25px;top:-6px;color:#2e3436">docs</div><div class="a fmt" style="left:234px;top:-6px;color:#a09f9c">5 个项目</div><div class="a fmt" style="left:240px;width:64px;text-align:right;top:-6px;color:#a09f9c">五</div><svg class="a" style="left:318.3px;top:-4.3px" width="8" height="8" viewBox="0 0 9 9"><path d="M4.5 1.1L5.5 3.4L8 3.6L6.1 5.3L6.7 7.8L4.5 6.5L2.3 7.8L2.9 5.3L1 3.6L3.5 3.4Z" fill="none" stroke="#2e3436" stroke-width="1.7" stroke-linejoin="round"/></svg></div><div class="a" style="left:90px;top:233px;width:336px;height:1px;background:#efeeec"></div><div class="a" style="left:90px;top:244px;width:336px;height:0"><svg class="a" style="left:8px;top:-7px" width="15" height="14" viewBox="0 0 15 14"><path d="M0.5 2A1 1 0 0 1 1.5 1H5.5L6.5 2H13.5A1 1 0 0 1 14.5 3V12.5A1 1 0 0 1 13.5 13.5H1.5A1 1 0 0 1 0.5 12.5Z" fill="#cdbcaa"/><path d="M0.5 4A1 1 0 0 1 1.5 3H13.5A1 1 0 0 1 14.5 4V12.5A1 1 0 0 1 13.5 13.5H1.5A1 1 0 0 1 0.5 12.5Z" fill="#e0d4c6"/><path d="M0.5 12.5H14.5" stroke="#c9b8a6" stroke-width="1"/></svg><div class="a fmt" style="left:25px;top:-6px;color:#2e3436">Downloads</div><div class="a fmt" style="left:234px;top:-6px;color:#a09f9c">0 个项目</div><div class="a fmt" style="left:240px;width:64px;text-align:right;top:-6px;color:#a09f9c">二</div><svg class="a" style="left:318.3px;top:-4.3px" width="8" height="8" viewBox="0 0 9 9"><path d="M4.5 1.1L5.5 3.4L8 3.6L6.1 5.3L6.7 7.8L4.5 6.5L2.3 7.8L2.9 5.3L1 3.6L3.5 3.4Z" fill="none" stroke="#2e3436" stroke-width="1.7" stroke-linejoin="round"/></svg></div><div class="a" style="left:90px;top:255px;width:336px;height:1px;background:#efeeec"></div><div class="a" style="left:90px;top:266px;width:336px;height:0"><svg class="a" style="left:8px;top:-7px" width="15" height="14" viewBox="0 0 15 14"><path d="M0.5 2A1 1 0 0 1 1.5 1H5.5L6.5 2H13.5A1 1 0 0 1 14.5 3V12.5A1 1 0 0 1 13.5 13.5H1.5A1 1 0 0 1 0.5 12.5Z" fill="#cdbcaa"/><path d="M0.5 4A1 1 0 0 1 1.5 3H13.5A1 1 0 0 1 14.5 4V12.5A1 1 0 0 1 13.5 13.5H1.5A1 1 0 0 1 0.5 12.5Z" fill="#e0d4c6"/><path d="M0.5 12.5H14.5" stroke="#c9b8a6" stroke-width="1"/></svg><div class="a fmt" style="left:25px;top:-6px;color:#2e3436">gnome-builder</div><div class="a fmt" style="left:234px;top:-6px;color:#a09f9c">1 个项目</div><div class="a fmt" style="left:240px;width:64px;text-align:right;top:-6px;color:#a09f9c">二</div><svg class="a" style="left:318.3px;top:-4.3px" width="8" height="8" viewBox="0 0 9 9"><path d="M4.5 1.1L5.5 3.4L8 3.6L6.1 5.3L6.7 7.8L4.5 6.5L2.3 7.8L2.9 5.3L1 3.6L3.5 3.4Z" fill="none" stroke="#2e3436" stroke-width="1.7" stroke-linejoin="round"/></svg></div><div class="a" style="left:90px;top:277px;width:336px;height:1px;background:#efeeec"></div>
</div>
<div class="win" id="ss">
 <div class="a" style="left:0;top:0;width:218px;height:25px;background:#e4e1dd;border-bottom:1px solid #d6d2cd"></div>
 <div class="a" style="left:3.2px;top:3px;width:76px;height:18px;background:#2b7de0;border-radius:3px;border:1px solid #1b6acb"></div>
 <div class="a" style="left:12.5px;top:7px;font-size:8.3px;line-height:12px;color:#fff;white-space:nowrap">抓取屏幕截图(1)</div>
 <div class="a" style="left:171px;top:4px;width:18px;height:17px;background:#f6f5f4;border:1px solid #dcd8d3;border-radius:3px"></div>
 <svg class="a" style="left:176.5px;top:8.5px" width="7" height="7"><path d="M0 1H7M0 3.5H7M0 6H7" stroke="#2e3436" stroke-width="1.1"/></svg>
 <svg class="a" style="left:202.5px;top:9px" width="7" height="7"><path d="M1 1L6 6M6 1L1 6" stroke="#2e3436" stroke-width="1.3"/></svg>
 <div class="a" style="left:13px;top:39px;font-size:7.8px;line-height:12px;color:#2e3436;white-space:nowrap">捕获区域</div>
 <div class="a" style="left:13px;top:53.2px;width:192px;height:50.4px;border:1px solid #dcd7d1;border-radius:3px;overflow:hidden;background:linear-gradient(#f4f3f2,#ebeae8)">
  <div class="a" style="left:0;top:0;width:63.5px;height:50px;background:#d8d4d0"></div>
  <div class="a" style="left:63.5px;top:0;width:1px;height:50px;background:#d9d4ce"></div>
  <div class="a" style="left:128px;top:0;width:1px;height:50px;background:#d9d4ce"></div>
 </div>
 <svg class="a" style="left:36px;top:63.3px" width="18" height="17" viewBox="0 0 18 17"><rect x="1" y="1" width="16" height="12.5" rx="2.5" fill="none" stroke="#2e3436" stroke-width="2"/><path d="M5 15.5H13" stroke="#6c6c6c" stroke-width="1.5"/></svg>
 <svg class="a" style="left:101.8px;top:63.6px" width="15" height="16" viewBox="0 0 15 16"><rect x="0" y="0" width="15" height="15.5" rx="1.8" fill="#2e3436"/><rect x="2" y="6.5" width="11" height="7" fill="#f2f1f0"/><path d="M9.6 1.6L12.2 4.2M12.2 1.6L9.6 4.2" stroke="#fff" stroke-width="1"/></svg>
 <svg class="a" style="left:165px;top:63px" width="17" height="16" viewBox="0 0 17 16"><path d="M5.1 0.9H15.9V11.6H14V3.7H5.1Z" fill="#2e3436"/><path d="M5.1 7.2H6.7V10.2H9.9V11.6H5.1Z" fill="#2e3436"/><g fill="#2e3436"><rect x="0.9" y="4.8" width="1.2" height="1.2"/><rect x="0.9" y="12.9" width="1.2" height="1.6"/><rect x="2.9" y="4.8" width="1.2" height="1.2"/><rect x="2.9" y="12.9" width="1.2" height="1.6"/><rect x="4.9" y="4.8" width="1.2" height="1.2"/><rect x="4.9" y="12.9" width="1.2" height="1.6"/><rect x="6.9" y="4.8" width="1.2" height="1.2"/><rect x="6.9" y="12.9" width="1.2" height="1.6"/><rect x="8.9" y="4.8" width="1.2" height="1.2"/><rect x="8.9" y="12.9" width="1.2" height="1.6"/><rect x="0.9" y="6.800000000000001" width="1.2" height="1.2"/><rect x="0.9" y="8.8" width="1.2" height="1.2"/><rect x="0.9" y="10.9" width="1.2" height="1.2"/></g><g fill="#9a9a9a"><rect x="10.9" y="4.800000000000001" width="1.6" height="1.2"/><rect x="10.9" y="6.800000000000001" width="1.6" height="1.2"/><rect x="10.9" y="8.8" width="1.6" height="1.2"/><rect x="10.9" y="10.9" width="1.6" height="1.2"/><rect x="10.9" y="13.0" width="1.6" height="1.2"/></g></svg>
 <div class="a ssl" style="left:13px;width:64px;top:84px">屏幕(S)</div>
 <div class="a ssl" style="left:77px;width:64px;top:84px">窗口(W)</div>
 <div class="a ssl" style="left:141px;width:64px;top:84px">选区(L)</div>
 <div class="a" style="left:13px;top:117px;width:192px;height:59px;border:1px solid #e4e1dd;border-radius:4px;background:#fbfbfa"></div>
 <div class="a" style="left:14px;top:146px;width:190px;height:1px;background:#e4e1dd"></div>
 <div class="a ssr" style="left:21px;top:126.5px">显示指针(P)</div>
 <div class="a ssr" style="left:21px;top:156px">延迟秒数(D)</div>
 <div class="a" style="left:170px;top:125px;width:27px;height:14.2px;border-radius:7px;background:#dedbd7;border:1px solid #d5d1cc"></div>
 <div class="a" style="left:170px;top:125px;width:14.2px;height:14.2px;border-radius:50%;background:#fbfbfb;border:1px solid #c9c5c0"></div>
 <div class="a" style="left:134.3px;top:152px;width:62.5px;height:18.6px;border:1px solid #dcd8d3;border-radius:3px;background:#fff"></div>
 <div class="a" style="left:159.3px;top:153px;width:1px;height:16.6px;background:#e6e3df"></div>
 <div class="a" style="left:178px;top:153px;width:1px;height:16.6px;background:#e6e3df"></div>
 <div class="a ssr" style="left:139px;top:156px">0</div>
 <div class="a" style="left:166.5px;top:161.2px;width:5px;height:1px;background:#cfcdca"></div>
 <svg class="a" style="left:184px;top:158px" width="7" height="7"><path d="M0.5 3.5H6.5M3.5 0.5V6.5" stroke="#2e3436" stroke-width="1.1"/></svg>
</div>
<div id="ws">
 <div class="a" style="left:3px;top:3px;width:40px;height:79.5px;border:3px solid #3584e4;border-radius:5px"></div>
 <div class="a" style="left:6px;top:6px;width:40px;height:73.5px;overflow:hidden;background:linear-gradient(#d9c2f5,#cdb0ef)">
  <div class="a" style="left:0;top:0;width:40px;height:5px;background:#f1f0ef"></div>
  <div class="a" style="left:1px;top:1.3px;width:2px;height:2px;background:#ccc"></div>
  <div class="a" style="left:0;top:5px;width:40px;height:59.8px;background:#1c1a24"><div class="a" style="left:0px;top:5.3px;width:30px;height:1.2px;background:#56545c"></div><div class="a" style="left:0px;top:10.5px;width:30px;height:1.2px;background:#56545c"></div><div class="a" style="left:0px;top:15.1px;width:10px;height:1.2px;background:#56545c"></div><div class="a" style="left:16px;top:15.1px;width:4px;height:1.2px;background:#9a6a48"></div><div class="a" style="left:0px;top:18.0px;width:8px;height:1.2px;background:#56545c"></div><div class="a" style="left:16px;top:18.0px;width:3px;height:1.2px;background:#56545c"></div><div class="a" style="left:0px;top:20.5px;width:10px;height:1.2px;background:#56545c"></div><div class="a" style="left:16px;top:20.5px;width:4px;height:1.2px;background:#56545c"></div><div class="a" style="left:0px;top:23.1px;width:8px;height:1.2px;background:#56545c"></div><div class="a" style="left:16px;top:23.1px;width:4px;height:1.2px;background:#56545c"></div><div class="a" style="left:0px;top:25.5px;width:8px;height:1.2px;background:#56545c"></div><div class="a" style="left:16px;top:25.5px;width:3px;height:1.2px;background:#56545c"></div><div class="a" style="left:0px;top:28.3px;width:9px;height:1.2px;background:#56545c"></div><div class="a" style="left:16px;top:28.3px;width:9px;height:1.2px;background:#56545c"></div><div class="a" style="left:0px;top:30.9px;width:9px;height:1.2px;background:#56545c"></div><div class="a" style="left:16px;top:30.9px;width:10px;height:1.2px;background:#56545c"></div><div class="a" style="left:0px;top:33.5px;width:9px;height:1.2px;background:#56545c"></div><div class="a" style="left:16px;top:33.5px;width:9px;height:1.2px;background:#56545c"></div><div class="a" style="left:0px;top:35.8px;width:10px;height:1.2px;background:#56545c"></div><div class="a" style="left:16px;top:35.8px;width:1px;height:1.2px;background:#56545c"></div><div class="a" style="left:0px;top:43.2px;width:18px;height:1.2px;background:#56545c"></div><div class="a" style="left:19.5px;top:43.2px;width:0.8px;height:1.2px;background:#56545c"></div></div>
 </div>
 <div class="a" style="left:6px;top:86px;width:40px;height:74px;overflow:hidden;background:linear-gradient(170deg,#dcc8f6 0%,#d3baf2 40%,#cfb2f0 100%)">
  <div class="a" style="left:-70px;top:41px;width:110px;height:50px;border-radius:50%;border-top:1.5px solid rgba(255,255,255,0.4)"></div>
 </div>
</div>
</div>
</body></html>
